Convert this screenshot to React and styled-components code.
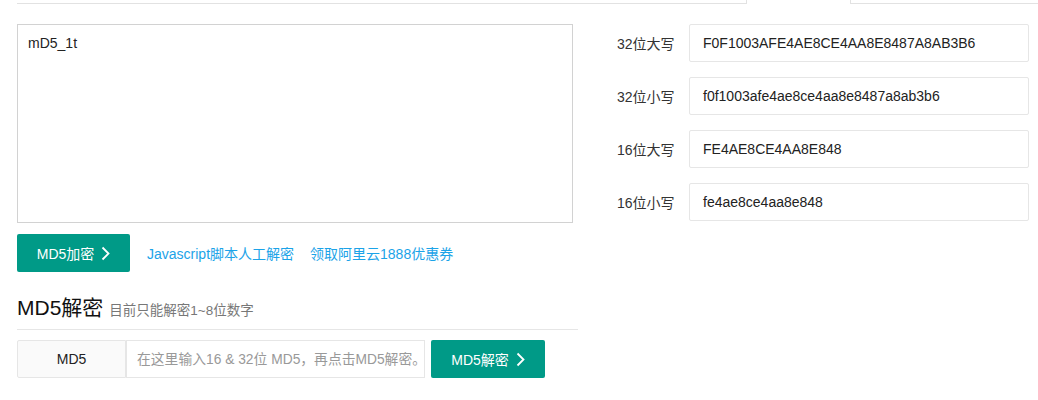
import React from "react";
import styled, { createGlobalStyle } from "styled-components";

const Global = createGlobalStyle`
  html, body { margin: 0; padding: 0; background: #fff; }
  body { font-family: "Liberation Sans", "Noto Sans CJK SC", sans-serif; font-size: 14px; color: #333; }
  * { box-sizing: border-box; }
`;

const Page = styled.div`
  width: 1038px;
  padding-left: 17px;
`;

const TabStrip = styled.div`
  display: flex;
  height: 4px;
`;

const TabEdge = styled.div`
  height: 4px;
  width: ${(p) => p.$w}px;
  ${(p) => (p.$open ? "" : "border-bottom: 1px solid #e2e2e2;")}
  ${(p) => (p.$right ? "border-right: 1px solid #e2e2e2;" : "")}
  ${(p) => (p.$left ? "border-left: 1px solid #e2e2e2;" : "")}
`;

const Main = styled.div`
  display: flex;
  margin-top: 20px;
`;

const LeftCol = styled.div`
  width: 556px;
`;

const TextArea = styled.textarea`
  display: block;
  width: 556px;
  height: 199px;
  border: 1px solid #d2d2d2;
  padding: 8px 10px;
  font-family: "Liberation Sans", "Noto Sans CJK SC", sans-serif;
  font-size: 14px;
  line-height: 20px;
  color: #222;
  resize: none;
  outline: none;
  margin: 0;
`;

const ActionRow = styled.div`
  display: flex;
  align-items: center;
  margin-top: 11px;
  gap: 17px;
`;

const PrimaryButton = styled.button`
  display: inline-flex;
  align-items: center;
  justify-content: center;
  gap: 7px;
  width: ${(p) => p.$w}px;
  height: 38px;
  border: none;
  border-radius: 2px;
  background: #009a87;
  color: #fff;
  font-family: "Liberation Sans", "Noto Sans CJK SC", sans-serif;
  font-size: 14px;
  padding: 0;
  flex: none;
`;

const Links = styled.div`
  display: flex;
  gap: 16px;
`;

const Link = styled.a`
  color: #1ba3e8;
  font-size: 14px;
  text-decoration: none;
`;

const RightCol = styled.div`
  margin-left: 44px;
  display: flex;
  flex-direction: column;
  gap: 15px;
`;

const FieldRow = styled.div`
  display: flex;
  align-items: center;
`;

const FieldLabel = styled.div`
  width: 72px;
  font-size: 14px;
  color: #333;
`;

const FieldValue = styled.div`
  width: 340px;
  height: 38px;
  border: 1px solid #e6e6e6;
  border-radius: 2px;
  padding-left: 13px;
  display: flex;
  align-items: center;
  font-size: 14px;
  color: #222;
`;

const Section = styled.div`
  width: 561px;
  margin-top: 19px;
`;

const Heading = styled.div`
  display: flex;
  align-items: baseline;
  gap: 6px;
  padding-bottom: 8px;
  border-bottom: 1px solid #e6e6e6;
`;

const Title = styled.span`
  font-size: 21px;
  color: #111;
`;

const Sub = styled.span`
  font-size: 13.5px;
  color: #777;
`;

const InputGroup = styled.div`
  display: flex;
  margin-top: 10px;
  align-items: center;
`;

const Addon = styled.div`
  width: 109px;
  height: 38px;
  border: 1px solid #e6e6e6;
  background: #fafafa;
  display: flex;
  align-items: center;
  justify-content: center;
  font-size: 14px;
  color: #222;
  border-radius: 2px 0 0 2px;
`;

const HashInput = styled.input`
  width: 299px;
  height: 38px;
  border: 1px solid #e6e6e6;
  border-left: 1px solid #e6e6e6;
  padding: 0 0 0 10px;
  font-family: "Liberation Sans", "Noto Sans CJK SC", sans-serif;
  font-size: 13.8px;
  outline: none;
  margin: 0 6px 0 0;
  &::placeholder { color: #999; }
`;

const Chevron = () => (
  <svg width="9" height="15" viewBox="0 0 9 15" fill="none">
    <path d="M1.5 1.5 L7.5 7.5 L1.5 13.5" stroke="#fff" strokeWidth="1.8" />
  </svg>
);

const results = [
  ["32位大写", "F0F1003AFE4AE8CE4AA8E8487A8AB3B6"],
  ["32位小写", "f0f1003afe4ae8ce4aa8e8487a8ab3b6"],
  ["16位大写", "FE4AE8CE4AA8E848"],
  ["16位小写", "fe4ae8ce4aa8e848"],
];

export default function App() {
  return (
    <Page>
      <Global />
      <TabStrip>
        <TabEdge $w={730} $right />
        <TabEdge $w={103} $open />
        <TabEdge $w={188} $left />
      </TabStrip>
      <Main>
        <LeftCol>
          <TextArea defaultValue="mD5_1t" />
          <ActionRow>
            <PrimaryButton $w={113}>
              MD5加密 <Chevron />
            </PrimaryButton>
            <Links>
              <Link href="#">Javascript脚本人工解密</Link>
              <Link href="#">领取阿里云1888优惠券</Link>
            </Links>
          </ActionRow>
        </LeftCol>
        <RightCol>
          {results.map(([label, value]) => (
            <FieldRow key={label}>
              <FieldLabel>{label}</FieldLabel>
              <FieldValue>{value}</FieldValue>
            </FieldRow>
          ))}
        </RightCol>
      </Main>
      <Section>
        <Heading>
          <Title>MD5解密</Title>
          <Sub>目前只能解密1~8位数字</Sub>
        </Heading>
        <InputGroup>
          <Addon>MD5</Addon>
          <HashInput placeholder="在这里输入16 & 32位 MD5，再点击MD5解密。" />
          <PrimaryButton $w={114}>
            MD5解密 <Chevron />
          </PrimaryButton>
        </InputGroup>
      </Section>
    </Page>
  );
}
